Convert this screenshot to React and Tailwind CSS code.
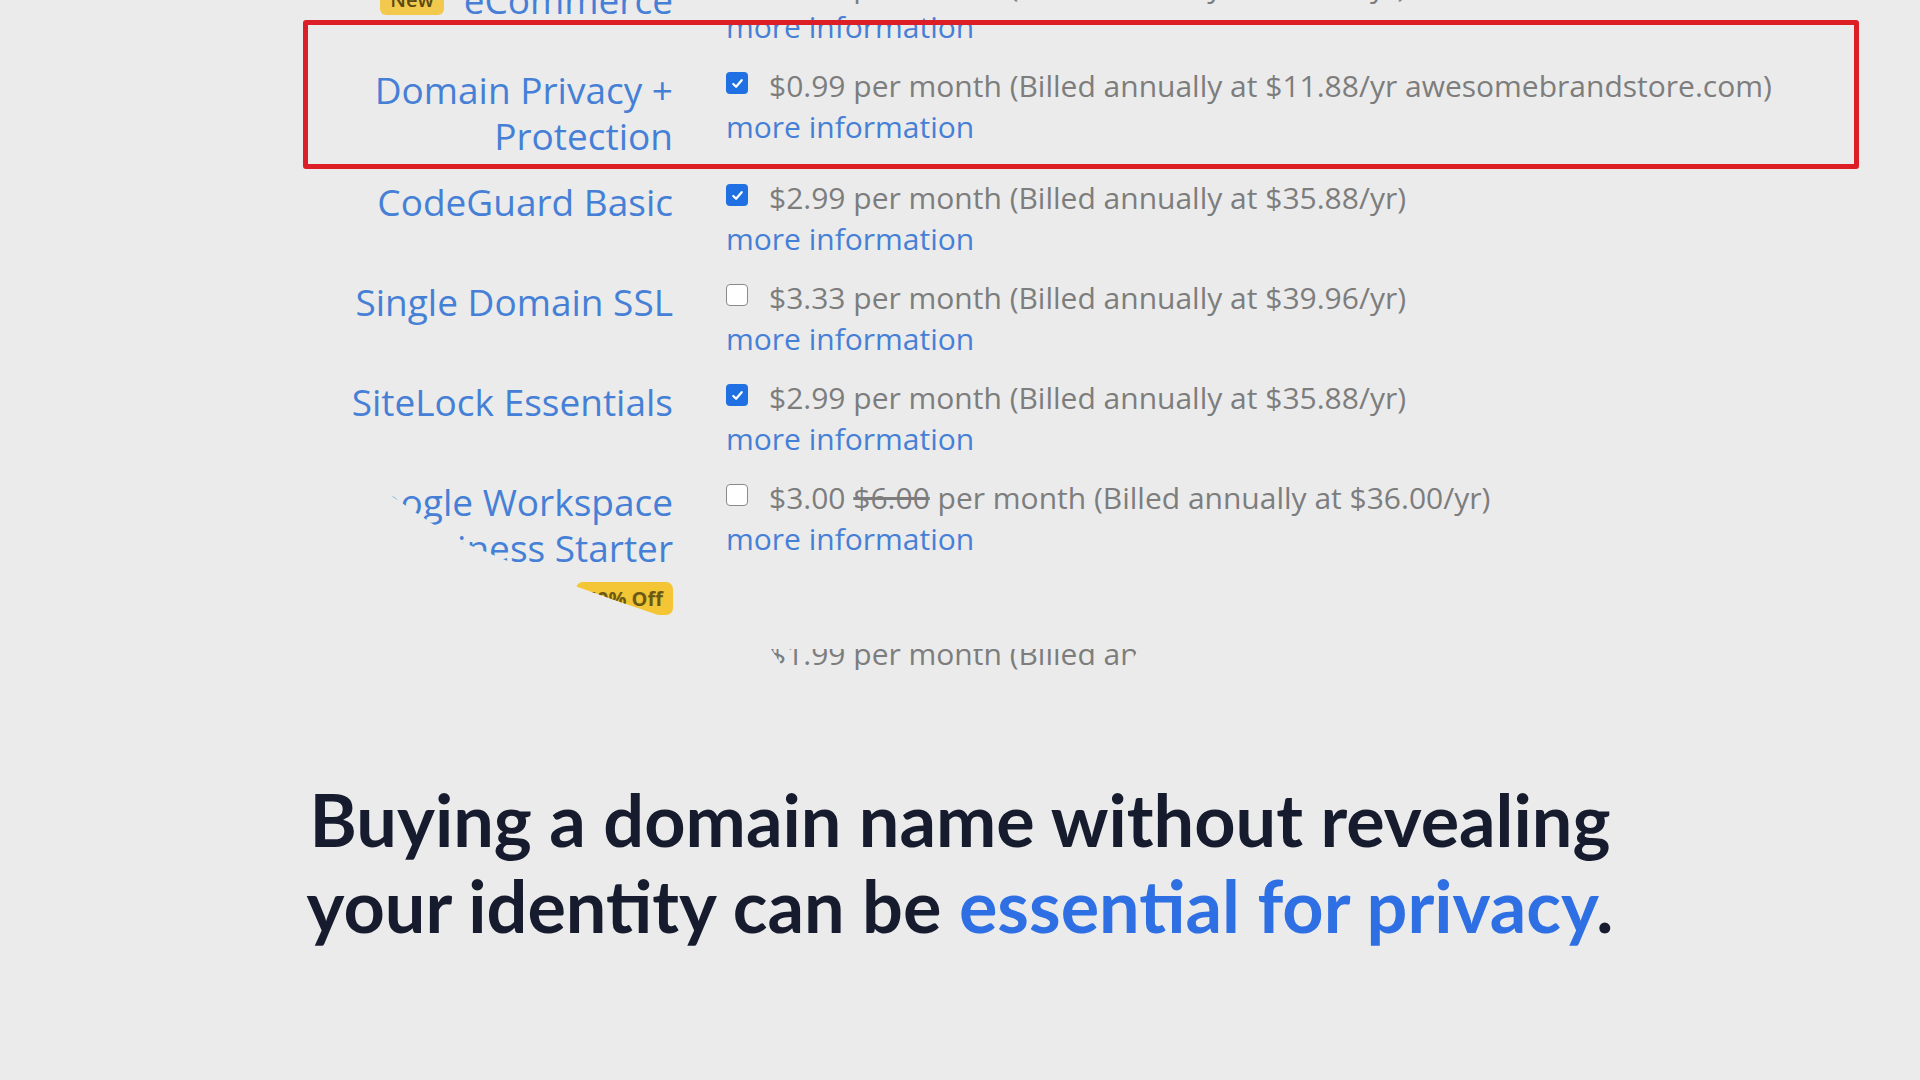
import React from 'react';

const rows = [
  {
    label: ['eCommerce'],
    newBadge: true,
    labelPad: 'pt-[12px]',
    checked: true,
    price: '$2.99 per month (Billed annually at $35.88/yr)',
  },
  {
    label: ['Domain Privacy +', 'Protection'],
    checked: true,
    price: '$0.99 per month (Billed annually at $11.88/yr awesomebrandstore.com)',
  },
  {
    label: ['CodeGuard Basic'],
    checked: true,
    price: '$2.99 per month (Billed annually at $35.88/yr)',
  },
  {
    label: ['Single Domain SSL'],
    checked: false,
    price: '$3.33 per month (Billed annually at $39.96/yr)',
  },
  {
    label: ['SiteLock Essentials'],
    checked: true,
    price: '$2.99 per month (Billed annually at $35.88/yr)',
  },
  {
    label: ['Google Workspace', 'Business Starter'],
    offBadge: '50% Off',
    checked: false,
    price: (
      <>
        $3.00 <span className="line-through">$6.00</span> per month (Billed annually at $36.00/yr)
      </>
    ),
  },
  {
    label: ['Microsoft 365'],
    checked: false,
    price: '$1.99 per month (Billed annually at $23.88/yr)',
  },
];

function Checkbox({ checked }) {
  if (checked) {
    return (
      <span className="mb-[5px] flex h-[22px] w-[22px] shrink-0 items-center justify-center rounded-[4px] bg-[#1f70e2]">
        <svg viewBox="0 0 16 16" className="h-[15px] w-[15px]">
          <path d="M3.5 8.5l3 3 6-7" fill="none" stroke="white" strokeWidth="2.4" strokeLinecap="round" strokeLinejoin="round" />
        </svg>
      </span>
    );
  }
  return <span className="mb-[5px] h-[22px] w-[22px] shrink-0 rounded-[4px] border-[1.5px] border-[#8a8a8a] bg-white" />;
}

function Row({ row }) {
  return (
    <div className="flex items-start gap-[53px] py-[9px]">
      <div className={`w-[370px] shrink-0 text-right text-[37px] leading-[46px] text-[#4680d6] ${row.labelPad || 'pt-[2px]'}`}>
        {row.label.map((line) => (
          <div key={line} className="flex items-center justify-end gap-[20px] whitespace-nowrap">
            {row.newBadge && (
              <span className="rounded-[6px] bg-[#f2c94c] px-[10px] text-[20px] font-semibold leading-[30px] text-[#5b4a12]">New</span>
            )}
            {line}
          </div>
        ))}
        {row.offBadge && (
          <div className="mt-[11px] flex justify-end">
            <span className="rounded-[7px] bg-[#f4c534] px-[10px] text-[20px] font-bold leading-[33px] text-[#6b5a14]">{row.offBadge}</span>
          </div>
        )}
      </div>
      <div className="text-[30px] leading-[41px]">
        <div className="flex items-center whitespace-nowrap">
          <Checkbox checked={row.checked} />
          <span className="ml-[21px] text-[#7d7d7d]">{row.price}</span>
        </div>
        <div className="text-[#4680d6]">more information</div>
      </div>
    </div>
  );
}

export default function App() {
  return (
    <div className="relative h-[1080px] w-full overflow-hidden bg-[#ebebeb] font-['Open_Sans',sans-serif]">
      <div className="h-[672px] overflow-hidden [clip-path:polygon(0_0,100%_0,100%_600px,1139px_600px,1139px_649px,1125px_670px,785px_670px,771px_649px,1139px_649px,1139px_600px,760px_600px,700px_626px,661px_616px,620px_602px,572px_585px,510px_562px,455px_539px,415px_512px,383px_490px,367px_484px,300px_470px,0_460px)]">
        <div className="-mt-[44px] pl-[303px]">
          {rows.map((row, i) => (
            <Row key={i} row={row} />
          ))}
        </div>
      </div>

      <h1 className="mt-[104px] text-center font-['Lato',sans-serif] text-[72px] font-bold leading-[86px] text-[#161b2e]">
        Buying a domain name without revealing
        <br />
        your identity can be <span className="text-[#2f6fe4]">essential for privacy</span>.
      </h1>

      <div className="pointer-events-none absolute left-[303px] top-[20px] h-[149px] w-[1556px] rounded-[3px] border-[5px] border-[#dc1f26]" />
    </div>
  );
}
